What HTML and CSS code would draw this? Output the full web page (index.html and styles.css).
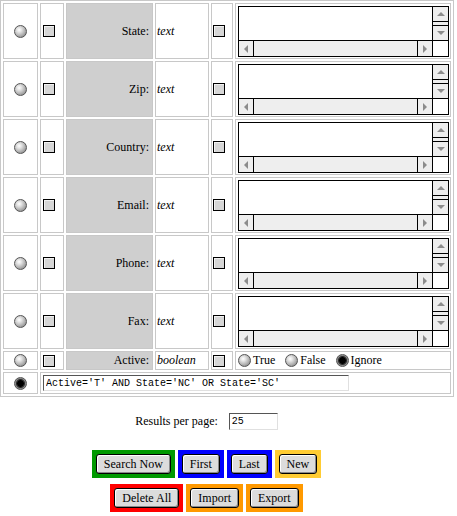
FILE: index.html
```html
<!DOCTYPE html>
<html lang="en">
<head>
  <meta charset="UTF-8">
  <title>Search</title>
  <link rel="stylesheet" href="styles.css">
</head>
<body>
  <table class="criteria">
    <tr>
      <td class="pick"><input type="radio" name="mode"></td>
      <td class="flag"><input type="checkbox"></td>
      <td class="label">State:</td>
      <td class="type">text</td>
      <td class="flag-b"><input type="checkbox"></td>
      <td class="value">
        <div class="memo">
          <div class="memo-main"><div class="memo-text"></div><div class="vbar"><span class="btn up"></span><span class="gap"></span><span class="btn down"></span></div></div>
          <div class="hbar"><span class="btn left"></span><span class="track"></span><span class="btn right"></span><span class="corner"></span></div>
        </div>
      </td>
    </tr>
    <tr>
      <td class="pick"><input type="radio" name="mode"></td>
      <td class="flag"><input type="checkbox"></td>
      <td class="label">Zip:</td>
      <td class="type">text</td>
      <td class="flag-b"><input type="checkbox"></td>
      <td class="value">
        <div class="memo">
          <div class="memo-main"><div class="memo-text"></div><div class="vbar"><span class="btn up"></span><span class="gap"></span><span class="btn down"></span></div></div>
          <div class="hbar"><span class="btn left"></span><span class="track"></span><span class="btn right"></span><span class="corner"></span></div>
        </div>
      </td>
    </tr>
    <tr>
      <td class="pick"><input type="radio" name="mode"></td>
      <td class="flag"><input type="checkbox"></td>
      <td class="label">Country:</td>
      <td class="type">text</td>
      <td class="flag-b"><input type="checkbox"></td>
      <td class="value">
        <div class="memo">
          <div class="memo-main"><div class="memo-text"></div><div class="vbar"><span class="btn up"></span><span class="gap"></span><span class="btn down"></span></div></div>
          <div class="hbar"><span class="btn left"></span><span class="track"></span><span class="btn right"></span><span class="corner"></span></div>
        </div>
      </td>
    </tr>
    <tr>
      <td class="pick"><input type="radio" name="mode"></td>
      <td class="flag"><input type="checkbox"></td>
      <td class="label">Email:</td>
      <td class="type">text</td>
      <td class="flag-b"><input type="checkbox"></td>
      <td class="value">
        <div class="memo">
          <div class="memo-main"><div class="memo-text"></div><div class="vbar"><span class="btn up"></span><span class="gap"></span><span class="btn down"></span></div></div>
          <div class="hbar"><span class="btn left"></span><span class="track"></span><span class="btn right"></span><span class="corner"></span></div>
        </div>
      </td>
    </tr>
    <tr>
      <td class="pick"><input type="radio" name="mode"></td>
      <td class="flag"><input type="checkbox"></td>
      <td class="label">Phone:</td>
      <td class="type">text</td>
      <td class="flag-b"><input type="checkbox"></td>
      <td class="value">
        <div class="memo">
          <div class="memo-main"><div class="memo-text"></div><div class="vbar"><span class="btn up"></span><span class="gap"></span><span class="btn down"></span></div></div>
          <div class="hbar"><span class="btn left"></span><span class="track"></span><span class="btn right"></span><span class="corner"></span></div>
        </div>
      </td>
    </tr>
    <tr>
      <td class="pick"><input type="radio" name="mode"></td>
      <td class="flag"><input type="checkbox"></td>
      <td class="label">Fax:</td>
      <td class="type">text</td>
      <td class="flag-b"><input type="checkbox"></td>
      <td class="value">
        <div class="memo">
          <div class="memo-main"><div class="memo-text"></div><div class="vbar"><span class="btn up"></span><span class="gap"></span><span class="btn down"></span></div></div>
          <div class="hbar"><span class="btn left"></span><span class="track"></span><span class="btn right"></span><span class="corner"></span></div>
        </div>
      </td>
    </tr>
    <tr class="short">
      <td class="pick"><input type="radio" name="mode"></td>
      <td class="flag"><input type="checkbox"></td>
      <td class="label">Active:</td>
      <td class="type">boolean</td>
      <td class="flag-b"><input type="checkbox"></td>
      <td class="value">
        <div class="choices">
          <label><input type="radio" name="active">True</label>
          <label><input type="radio" name="active">False</label>
          <label><input type="radio" name="active" checked>Ignore</label>
        </div>
      </td>
    </tr>
    <tr class="query-row">
      <td class="pick"><input type="radio" name="mode" checked></td>
      <td colspan="5" class="query-cell"><input type="text" class="query" value="Active='T' AND State='NC' OR State='SC'"></td>
    </tr>
  </table>

  <div class="foot">
    <div class="results">
      <span>Results per page:</span>
      <input type="text" class="per-page" value="25">
    </div>
    <div class="actions">
      <span class="swatch green"><button>Search Now</button></span>
      <span class="swatch blue"><button>First</button></span>
      <span class="swatch blue"><button>Last</button></span>
      <span class="swatch gold"><button>New</button></span>
    </div>
    <div class="actions">
      <span class="swatch red"><button>Delete All</button></span>
      <span class="swatch orange"><button>Import</button></span>
      <span class="swatch orange"><button>Export</button></span>
    </div>
  </div>
</body>
</html>
```

FILE: styles.css
```css
body {
  margin: 0;
  background: #fff;
  color: #000;
  font: 12px "Liberation Serif", "Times New Roman", serif;
}

/* criteria table */
.criteria {
  width: 454px;
  table-layout: fixed;
  border: 1px solid #c8c8c8;
  border-spacing: 2px;
}

.criteria td {
  box-sizing: border-box;
  border: 1px solid #c8c8c8;
  padding: 1px;
  vertical-align: middle;
}

.pick {
  width: 35px;
}

.flag {
  width: 24px;
}

.criteria td.flag {
  padding-left: 2px;
}

.label {
  width: 87px;
  text-align: right;
}

.criteria td.label {
  background: #cfcfcf;
  padding-right: 3px;
}

.type {
  width: 54px;
  font-style: italic;
}

.flag-b {
  width: 22px;
}

.value {
  width: 216px;
}

.criteria td.value {
  padding: 2px 1px 1px 2px;
}

.short td {
  line-height: 15px;
}

.criteria .short td.value {
  padding: 1px;
}

/* radios and checkboxes */
input[type="radio"],
input[type="checkbox"] {
  -webkit-appearance: none;
  appearance: none;
  display: block;
  margin: 0;
  box-sizing: border-box;
}

input[type="radio"] {
  width: 13px;
  height: 13px;
  border: 1px solid #555;
  border-radius: 50%;
  background: radial-gradient(circle at 38% 35%, #fff 0, #e2e2e2 25%, #a8a8a8 65%, #707070 100%);
}

input[type="radio"]:checked {
  background: radial-gradient(circle, #000 0 3px, #2a2a2a 3.5px 4px, #8a8a8a 5px);
}

.pick input[type="radio"] {
  margin: 0 auto;
}

input[type="checkbox"] {
  width: 12px;
  height: 12px;
  border: 1px solid #000;
  background: #d6d6d6;
  box-shadow: inset 1px 1px #f2f2f2;
}

/* fake textarea */
.memo {
  width: 211px;
  height: 51px;
  box-sizing: border-box;
  border: 1px solid #000;
  display: flex;
  flex-direction: column;
  background: #fff;
}

.memo-main {
  flex: 1;
  display: flex;
}

.memo-text {
  flex: 1;
}

.vbar {
  width: 15px;
  border-left: 1px solid #000;
  display: flex;
  flex-direction: column;
  background: #eee;
}

.btn {
  display: flex;
  align-items: center;
  justify-content: center;
  background: #eee;
}

.btn::after {
  content: "";
  border: 4px solid transparent;
}

.up {
  height: 14px;
  border-bottom: 1px solid #000;
}

.up::after {
  border-top: 0;
  border-bottom-color: #8c8c8c;
}

.vbar .gap {
  flex: 1;
}

.down {
  height: 14px;
  border-top: 1px solid #000;
}

.down::after {
  border-bottom: 0;
  border-top-color: #8c8c8c;
}

.hbar {
  height: 15px;
  border-top: 1px solid #000;
  display: flex;
  background: #eee;
}

.left {
  width: 14px;
  border-right: 1px solid #000;
}

.left::after {
  border-left: 0;
  border-right-color: #8c8c8c;
}

.track {
  flex: 1;
}

.right {
  width: 14px;
  border-left: 1px solid #000;
}

.right::after {
  border-right: 0;
  border-left-color: #8c8c8c;
}

.corner {
  width: 15px;
  border-left: 1px solid #000;
  background: #fff;
}

/* boolean choices */
.choices {
  display: flex;
  align-items: center;
  padding-left: 1px;
}

.choices label {
  display: flex;
  align-items: center;
  gap: 2px;
  margin-right: 10px;
}

/* free query */
.criteria td.query-cell {
  padding: 2px;
}

.query,
.per-page {
  box-sizing: border-box;
  margin: 0;
  border: 1px solid;
  border-color: #555 #e0e0e0 #e0e0e0 #555;
  padding: 0 2px;
  font: 10px "Liberation Mono", "Courier New", monospace;
  color: #000;
  background: #fff;
  outline: none;
}

.query {
  display: block;
  width: 306px;
  height: 16px;
}

/* footer */
.foot {
  width: 413px;
}

.results {
  display: flex;
  justify-content: center;
  align-items: center;
  gap: 11px;
  margin-top: 16px;
}

.per-page {
  width: 49px;
  height: 17px;
}

.actions {
  display: flex;
  justify-content: center;
  gap: 3px;
  margin-top: 20px;
}

.actions + .actions {
  margin-top: 6px;
}

.swatch {
  display: flex;
  padding: 4px;
}

.green { background: #009900; }
.blue { background: #0000ff; }
.gold { background: #ffcc33; }
.orange { background: #ff9900; }
.red { background: #ff0000; }

.swatch button {
  height: 20px;
  margin: 0;
  padding: 0 7px;
  border: 1px solid #000;
  border-radius: 3px;
  background: #dcdcdc;
  box-shadow: inset 1px 1px #fff, inset -1px -1px #8a8a8a;
  font: 12px "Liberation Serif", "Times New Roman", serif;
  color: #000;
}
```
